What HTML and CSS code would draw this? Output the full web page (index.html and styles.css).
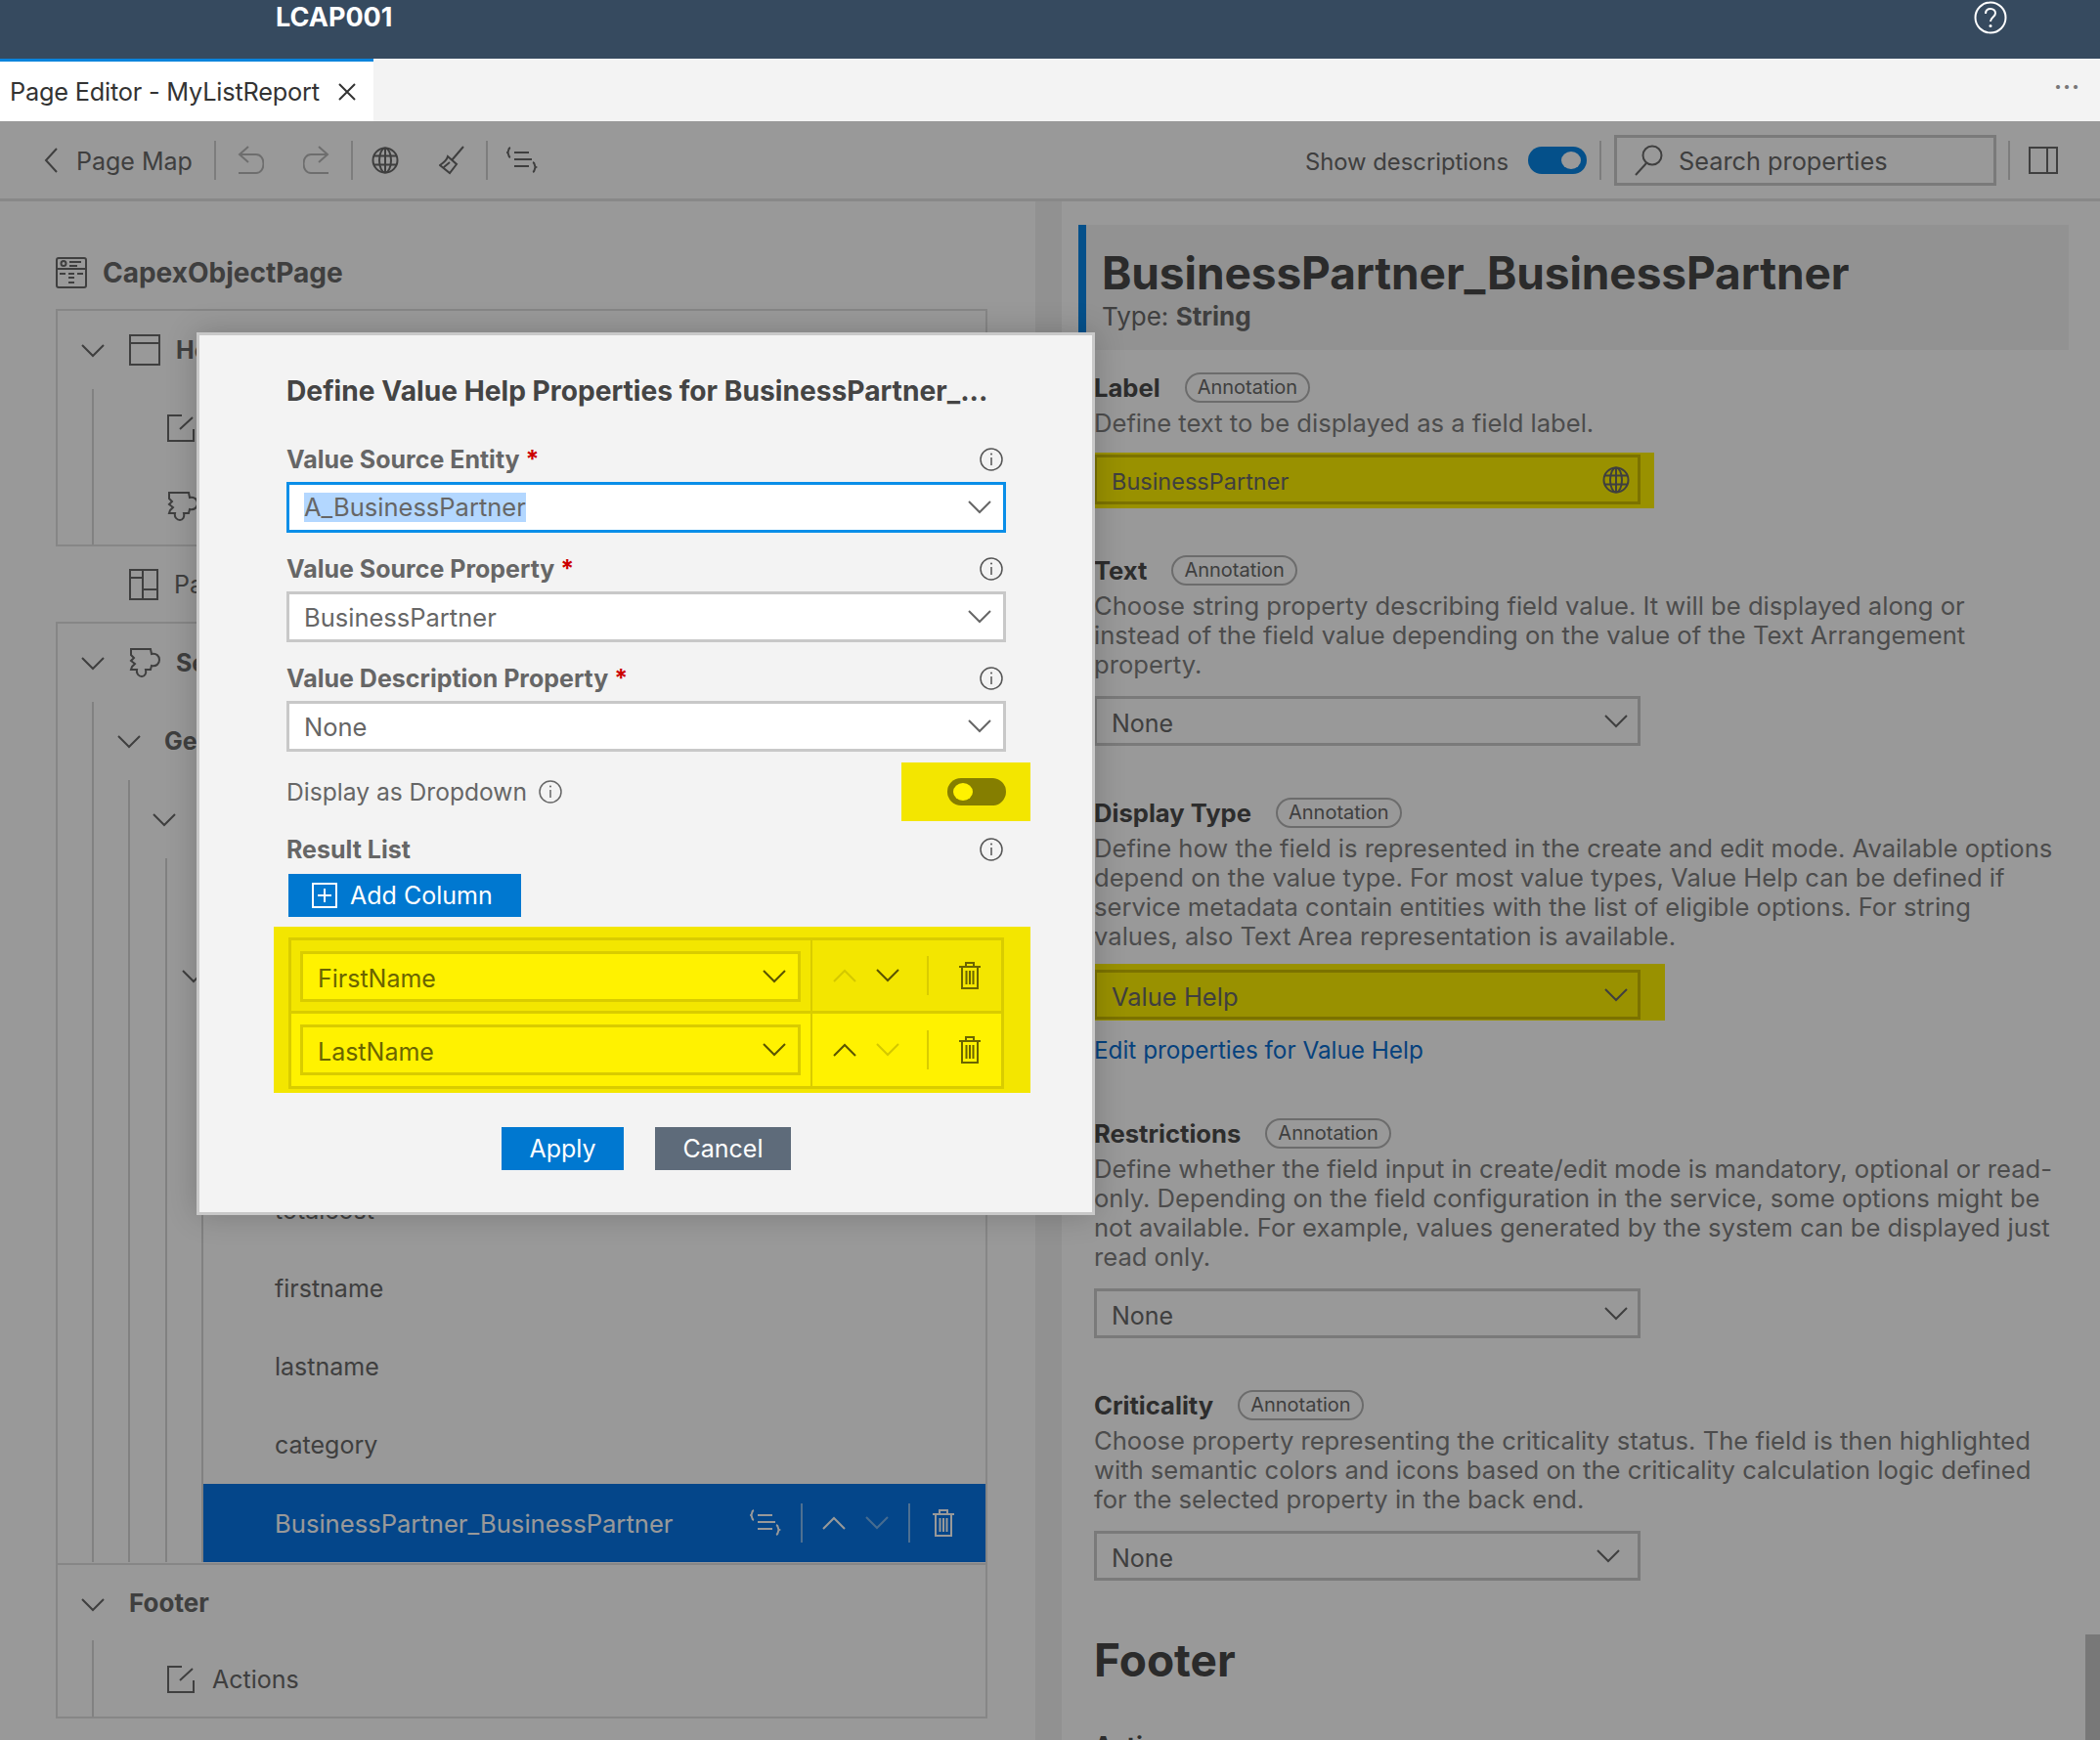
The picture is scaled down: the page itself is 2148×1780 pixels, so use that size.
FILE: index.html
```html
<!DOCTYPE html>
<html lang="en">

<head>
    <meta charset="UTF-8">
    <title>Page Editor - MyListReport</title>
    <link rel="stylesheet" href="styles.css">
</head>

<body>
    <svg class="defs" width="0" height="0">
        <symbol id="chev-down" viewBox="0 0 24 14"><path d="M1 1l11 11L23 1" fill="none" stroke="currentColor" stroke-width="2"/></symbol>
        <symbol id="chev-up" viewBox="0 0 24 14"><path d="M1 13L12 2l11 11" fill="none" stroke="currentColor" stroke-width="2"/></symbol>
        <symbol id="globe" viewBox="0 0 28 28"><g fill="none" stroke="currentColor" stroke-width="2"><circle cx="14" cy="14" r="12.500"/><ellipse cx="14" cy="14" rx="6" ry="12.500"/><path d="M14 1.500v25M2 9.500h24M2 18.500h24"/></g></symbol>
        <symbol id="braces" viewBox="0 0 32 28"><g fill="none" stroke="currentColor" stroke-width="2"><path d="M4 1C1 2 3 5 1 6c2 1 0 4 3 5M27 16c3 1 1 4 3 5-2 1 0 4-3 5"/><path d="M8 6h15M8 13h18M8 20h15"/></g></symbol>
        <symbol id="trash" viewBox="0 0 22 28"><g fill="none" stroke="currentColor" stroke-width="2"><path d="M0 5h22M7 5V1h8v4M3 5v22h16V5M7.500 9v14M11 9v14M14.500 9v14"/></g></symbol>
        <symbol id="info" viewBox="0 0 24 24"><circle cx="12" cy="12" r="11" fill="none" stroke="currentColor" stroke-width="1.500"/><path d="M12 10v8" stroke="currentColor" stroke-width="1.500"/><circle cx="12" cy="6.500" r="1" fill="currentColor"/></symbol>
        <symbol id="external" viewBox="0 0 28 28"><path d="M27 15v12H1V1h14M13 15L26 3" fill="none" stroke="currentColor" stroke-width="2"/></symbol>
        <symbol id="puzzle" viewBox="0 0 32 32"><path d="M2 2h20l1 5c5-1 8 2 8 6s-3 7-8 6l-1 4h-5c1 4-1 7-4 7s-6-3-5-7H2l1-3 3-3-4-3 3-3-3-3z" fill="none" stroke="currentColor" stroke-width="2"/></symbol>
    </svg>

    <div class="shell-bar">
        <span class="shell-title">LCAP001</span>
        <svg class="help-icon" width="34" height="34" viewBox="0 0 34 34">
            <circle cx="17" cy="17" r="15.500" fill="none" stroke="#fff" stroke-width="2"/>
            <path d="M12 13c0-3 2-5 5-5s5 2 5 4.500c0 4-5 4-5 8.500" fill="none" stroke="#fff" stroke-width="2"/>
            <circle cx="17" cy="25.500" r="1.500" fill="#fff"/>
        </svg>
    </div>

    <div class="tab-bar">
        <div class="tab">
            <span>Page Editor - MyListReport</span>
            <svg width="20" height="20" viewBox="0 0 20 20"><path d="M2 2l16 16M18 2L2 18" stroke="#333" stroke-width="2"/></svg>
        </div>
        <span class="tab-more">&middot;&middot;&middot;</span>
    </div>

    <div class="toolbar">
        <div class="tool-group">
            <svg class="tool-back" width="14" height="26" viewBox="0 0 14 26"><path d="M13 1L2 13l11 12" fill="none" stroke="currentColor" stroke-width="2"/></svg>
            <span class="tool-text">Page Map</span>
            <i class="tool-sep sep-map"></i>
            <svg class="tool-icon off" width="28" height="30" viewBox="0 0 28 30"><path d="M12 1L3 9l9 8M3 9h17c10 0 10 19 0 19H2" fill="none" stroke="currentColor" stroke-width="2"/></svg>
            <svg class="tool-icon off redo" width="28" height="30" viewBox="0 0 28 30"><path d="M16 1l9 8-9 8M25 9H8c-10 0-10 19 0 19h18" fill="none" stroke="currentColor" stroke-width="2"/></svg>
            <i class="tool-sep sep-redo"></i>
            <svg class="tool-icon globe-btn" width="28" height="28"><use href="#globe"/></svg>
            <svg class="tool-icon broom" width="26" height="30" viewBox="0 0 26 30"><path d="M25 1L13 15M9 11l9 8-7 9-10-8c3-2 7-5 8-9zM5 22l6-5" fill="none" stroke="currentColor" stroke-width="2"/></svg>
            <i class="tool-sep sep-broom"></i>
            <svg class="tool-icon braces-btn" width="32" height="28"><use href="#braces"/></svg>
        </div>
        <div class="tool-group right">
            <span class="tool-text">Show descriptions</span>
            <span class="toggle on"><i></i></span>
            <i class="tool-sep sep-toggle"></i>
            <div class="search-box">
                <svg width="30" height="32" viewBox="0 0 30 32"><circle cx="19" cy="11" r="9.500" fill="none" stroke="currentColor" stroke-width="2"/><path d="M13 19L2 31" stroke="currentColor" stroke-width="2"/></svg>
                <span>Search properties</span>
            </div>
            <i class="tool-sep sep-search"></i>
            <svg class="tool-icon" width="30" height="28" viewBox="0 0 30 28"><path d="M1 1h28v26H1zM19 1v26" fill="none" stroke="currentColor" stroke-width="2"/></svg>
        </div>
    </div>

    <div class="main">
        <div class="left-panel">
            <div class="page-title">
                <svg width="32" height="32" viewBox="0 0 32 32"><g fill="none" stroke="currentColor" stroke-width="2"><rect x="1" y="1" width="30" height="30" rx="2"/><path d="M1 12h30M14 5h12M14 9h8M4 17h6M13 17h6M22 17h6M13 21h6M13 26h6"/><circle cx="8" cy="6.500" r="2.500"/></g></svg>
                <span>CapexObjectPage</span>
            </div>

            <div class="tree-box header-box">
                <div class="tree-row">
                    <svg class="chev"><use href="#chev-down"/></svg>
                    <svg class="node-icon" width="32" height="32" viewBox="0 0 32 32"><path d="M1 1h30v30H1zM1 9h30" fill="none" stroke="currentColor" stroke-width="2"/></svg>
                    <b>Header</b>
                </div>
                <div class="tree-kids first">
                    <div class="tree-row leaf">
                        <svg class="node-icon" width="28" height="28"><use href="#external"/></svg>
                        <span>Actions</span>
                    </div>
                    <div class="tree-row leaf">
                        <svg class="node-icon" width="32" height="32"><use href="#puzzle"/></svg>
                        <span>Header Section</span>
                    </div>
                </div>
            </div>

            <div class="tree-row solo">
                <svg class="node-icon" width="30" height="32" viewBox="0 0 30 32"><path d="M1 1h28v30H1zM14 1v30M14 21h15M1 9h13" fill="none" stroke="currentColor" stroke-width="2"/></svg>
                <span>Page Layout</span>
            </div>

            <div class="tree-box sections">
                <div class="tree-row">
                    <svg class="chev"><use href="#chev-down"/></svg>
                    <svg class="node-icon" width="32" height="32"><use href="#puzzle"/></svg>
                    <b>Sections</b>
                </div>
                <div class="tree-kids first">
                    <div class="tree-row level-two">
                        <svg class="chev"><use href="#chev-down"/></svg>
                        <b>General</b>
                    </div>
                    <div class="tree-kids second">
                        <div class="tree-row level-three">
                            <svg class="chev"><use href="#chev-down"/></svg>
                        </div>
                        <div class="tree-kids third">
                            <div class="tree-row"></div>
                            <div class="tree-row level-four">
                                <svg class="chev small"><use href="#chev-down"/></svg>
                            </div>
                            <div class="columns">
                                <div class="col-row"></div>
                                <div class="col-row"></div>
                                <div class="col-row">totalcost</div>
                                <div class="col-row">firstname</div>
                                <div class="col-row">lastname</div>
                                <div class="col-row">category</div>
                                <div class="col-row selected">
                                    <span>BusinessPartner_BusinessPartner</span>
                                    <div class="row-tools">
                                        <svg width="32" height="28"><use href="#braces"/></svg>
                                        <i></i>
                                        <svg class="up" width="24" height="14"><use href="#chev-up"/></svg>
                                        <svg class="dim" width="24" height="14"><use href="#chev-down"/></svg>
                                        <i></i>
                                        <svg class="bin" width="22" height="28"><use href="#trash"/></svg>
                                    </div>
                                </div>
                            </div>
                        </div>
                    </div>
                </div>
            </div>

            <div class="tree-box footer-box">
                <div class="tree-row">
                    <svg class="chev"><use href="#chev-down"/></svg>
                    <b>Footer</b>
                </div>
                <div class="tree-kids first">
                    <div class="tree-row leaf">
                        <svg class="node-icon" width="28" height="28"><use href="#external"/></svg>
                        <span>Actions</span>
                    </div>
                </div>
            </div>
        </div>

        <div class="panel-gutter"></div>

        <div class="right-panel">
            <div class="prop-head">
                <h1>BusinessPartner_BusinessPartner</h1>
                <p>Type: <b>String</b></p>
            </div>

            <div class="prop first-prop">
                <div class="prop-label"><b>Label</b><span class="pill">Annotation</span></div>
                <p>Define text to be displayed as a field label.</p>
                <div class="mark">
                    <div class="field">
                        <span>BusinessPartner</span>
                        <svg width="28" height="28"><use href="#globe"/></svg>
                    </div>
                </div>
            </div>

            <div class="prop">
                <div class="prop-label"><b>Text</b><span class="pill">Annotation</span></div>
                <p>Choose string property describing field value. It will be displayed along or instead of the field value depending on the value of the Text Arrangement property.</p>
                <div class="field">
                    <span>None</span>
                    <svg width="24" height="14"><use href="#chev-down"/></svg>
                </div>
            </div>

            <div class="prop">
                <div class="prop-label"><b>Display Type</b><span class="pill">Annotation</span></div>
                <p>Define how the field is represented in the create and edit mode. Available options depend on the value type. For most value types, Value Help can be defined if service metadata contain entities with the list of eligible options. For string values, also Text Area representation is available.</p>
                <div class="mark wide">
                    <div class="field">
                        <span>Value Help</span>
                        <svg width="24" height="14"><use href="#chev-down"/></svg>
                    </div>
                </div>
                <a class="prop-link">Edit properties for Value Help</a>
            </div>

            <div class="prop">
                <div class="prop-label"><b>Restrictions</b><span class="pill">Annotation</span></div>
                <p>Define whether the field input in create/edit mode is mandatory, optional or read-only. Depending on the field configuration in the service, some options might be not available. For example, values generated by the system can be displayed just read only.</p>
                <div class="field">
                    <span>None</span>
                    <svg width="24" height="14"><use href="#chev-down"/></svg>
                </div>
            </div>

            <div class="prop">
                <div class="prop-label"><b>Criticality</b><span class="pill">Annotation</span></div>
                <p>Choose property representing the criticality status. The field is then highlighted with semantic colors and icons based on the criticality calculation logic defined for the selected property in the back end.</p>
                <div class="field">
                    <span>None</span>
                    <svg class="shift" width="24" height="14"><use href="#chev-down"/></svg>
                </div>
            </div>

            <h2>Footer</h2>
            <div class="prop-label"><b>Actions</b></div>
        </div>
        <div class="scroll-thumb"></div>
    </div>

    <div class="overlay">
        <div class="dialog">
            <h3>Define Value Help Properties for BusinessPartner_...</h3>

            <div class="dlg-label"><span>Value Source Entity <em>*</em></span><svg width="24" height="24"><use href="#info"/></svg></div>
            <div class="dlg-field focus">
                <span class="selected-text">A_BusinessPartner</span>
                <svg width="24" height="14"><use href="#chev-down"/></svg>
            </div>

            <div class="dlg-label"><span>Value Source Property <em>*</em></span><svg width="24" height="24"><use href="#info"/></svg></div>
            <div class="dlg-field">
                <span>BusinessPartner</span>
                <svg width="24" height="14"><use href="#chev-down"/></svg>
            </div>

            <div class="dlg-label"><span>Value Description Property <em>*</em></span><svg width="24" height="24"><use href="#info"/></svg></div>
            <div class="dlg-field">
                <span>None</span>
                <svg width="24" height="14"><use href="#chev-down"/></svg>
            </div>

            <div class="dropdown-row">
                <span>Display as Dropdown</span>
                <svg width="24" height="24"><use href="#info"/></svg>
                <div class="toggle-mark"><span class="toggle off"><i></i></span></div>
            </div>

            <div class="dlg-label result"><span>Result List</span><svg width="24" height="24"><use href="#info"/></svg></div>
            <button class="btn add-btn">
                <svg width="26" height="26" viewBox="0 0 26 26"><path d="M1 1h24v24H1zM13 6v14M6 13h14" fill="none" stroke="#fff" stroke-width="2"/></svg>
                Add Column
            </button>

            <div class="list-mark">
                <div class="list-table">
                    <div class="list-row shaded">
                        <div class="list-cell">
                            <div class="list-select">
                                <span>FirstName</span>
                                <svg width="24" height="14"><use href="#chev-down"/></svg>
                            </div>
                        </div>
                        <div class="list-tools">
                            <svg class="dim" width="24" height="14"><use href="#chev-up"/></svg>
                            <svg width="24" height="14"><use href="#chev-down"/></svg>
                            <i></i>
                            <svg class="bin" width="22" height="28"><use href="#trash"/></svg>
                        </div>
                    </div>
                    <div class="list-row">
                        <div class="list-cell">
                            <div class="list-select">
                                <span>LastName</span>
                                <svg width="24" height="14"><use href="#chev-down"/></svg>
                            </div>
                        </div>
                        <div class="list-tools">
                            <svg width="24" height="14"><use href="#chev-up"/></svg>
                            <svg class="dim" width="24" height="14"><use href="#chev-down"/></svg>
                            <i></i>
                            <svg class="bin" width="22" height="28"><use href="#trash"/></svg>
                        </div>
                    </div>
                </div>
            </div>

            <div class="dlg-actions">
                <button class="btn apply-btn">Apply</button>
                <button class="btn cancel-btn">Cancel</button>
            </div>
        </div>
    </div>
</body>

</html>
```

FILE: styles.css
```css
* {
    margin: 0;
    padding: 0;
    box-sizing: border-box;
}

body {
    position: relative;
    width: 2148px;
    height: 1780px;
    overflow: hidden;
    background: #fff;
    font-family: Inter, 'Noto Sans', sans-serif;
    font-size: 25px;
    color: #696969;
}

.defs {
    position: absolute;
}

svg {
    flex: none;
    display: block;
}

i {
    display: block;
}

/* top bars */
.shell-bar {
    height: 60px;
    background: #364a5f;
    display: flex;
    justify-content: space-between;
    padding: 1px 95px 0 282px;
}

.shell-title {
    color: #fff;
    font-size: 27px;
    font-weight: 700;
    line-height: 34px;
}

.tab-bar {
    height: 64px;
    background: #f3f3f3;
    display: flex;
    justify-content: space-between;
}

.tab {
    width: 382px;
    background: #fff;
    border-top: 3px solid #0a84dc;
    padding-left: 10px;
    display: flex;
    align-items: center;
    gap: 18px;
    color: #333;
    font-size: 25.300px;
    letter-spacing: -0.2px;
}

.tab-more {
    padding-right: 20px;
    line-height: 58px;
    font-size: 24px;
    font-weight: 700;
    color: #777;
    letter-spacing: 1px;
}

.toolbar {
    height: 82px;
    border-bottom: 3px solid #e3e3e3;
    display: flex;
    justify-content: space-between;
    align-items: center;
    color: #696969;
}

.tool-group {
    display: flex;
    align-items: center;
    padding-left: 45px;
}

.tool-group.right {
    padding: 0 43px 0 0;
}

.tool-text {
    margin-left: 19px;
    padding-top: 2px;
}

.right .tool-text {
    margin: 0 20px 0 0;
    padding-top: 3px;
    font-size: 23.800px;
}

.tool-sep {
    width: 2px;
    height: 40px;
    background: #d0d0d0;
}

.sep-map { margin: 0 21px 0 22px; }
.redo { margin: 0 21px 0 40px; }
.globe-btn { margin: 0 41px 0 19px; }
.broom { margin-right: 22px; }
.braces-btn { margin-left: 19px; }
.sep-toggle { margin: 0 13px; }
.sep-search { margin: 0 19px 0 12px; }

.tool-icon.off {
    color: #b8b8b8;
}

.toggle {
    display: block;
    width: 60px;
    height: 28px;
    border-radius: 14px;
    position: relative;
}

.toggle i {
    position: absolute;
    top: 5px;
    width: 20px;
    height: 18px;
    border-radius: 50%;
    background: #fff;
}

.toggle.on {
    background: #0885e6;
}

.toggle.on i {
    left: 34px;
}

.toggle.off {
    background: #857e00;
}

.toggle.off i {
    left: 6px;
    background: #fff200;
}

.search-box {
    width: 391px;
    height: 52px;
    border: 3px solid #cbcbcb;
    display: flex;
    align-items: center;
    gap: 16px;
    padding-left: 17px;
    color: #696969;
}

.search-box span {
    font-size: 25.300px;
    padding-top: 1px;
}

/* main area */
.main {
    position: relative;
    height: 1574px;
    display: flex;
}

.left-panel {
    width: 1059px;
    padding: 0 49px 0 57px;
}

.panel-gutter {
    width: 27px;
    background: #f2f2f2;
}

.page-title {
    height: 110px;
    display: flex;
    align-items: center;
    gap: 16px;
    font-size: 28px;
    font-weight: 700;
    padding-top: 36px;
}

.tree-box {
    border: 2px solid #e0e0e0;
}

.header-box {
    height: 243px;
    overflow: hidden;
}

.tree-row {
    height: 80px;
    display: flex;
    align-items: center;
    position: relative;
    padding-left: 73px;
    gap: 16px;
}

.tree-row b {
    font-weight: 700;
}

.chev {
    position: absolute;
    left: 24px;
    top: 34px;
    width: 24px;
    height: 14px;
}

.tree-kids {
    border-left: 2px solid #d8d8d8;
}

.tree-kids.first {
    margin-left: 35px;
}

.tree-row.leaf {
    padding-left: 75px;
    gap: 18px;
}

.tree-row.solo {
    height: 77px;
    padding-left: 75px;
}

.tree-box.sections {
    height: 963px;
    border-bottom: none;
    overflow: hidden;
}

.level-two {
    padding-left: 72px;
}

.level-two .chev {
    left: 24px;
}

.tree-kids.second {
    margin-left: 35px;
}

.level-three .chev {
    left: 23px;
}

.tree-kids.third {
    margin-left: 36px;
}

.level-four .chev {
    left: 15px;
}

.columns {
    margin-left: 35px;
    border-left: 2px solid #d8d8d8;
}

.col-row {
    height: 80px;
    display: flex;
    align-items: center;
    padding-left: 73px;
    justify-content: space-between;
}

.col-row.selected {
    background: #0776e6;
    color: #fff;
    padding-right: 32px;
}

.col-row.selected > span {
    font-size: 25.600px;
}

.row-tools {
    display: flex;
    align-items: center;
    gap: 20px;
}

.row-tools i {
    width: 2px;
    height: 40px;
    background: rgba(255, 255, 255, 0.5);
}

.row-tools .dim {
    opacity: 0.45;
}

.row-tools .bin {
    margin-left: 3px;
}

.footer-box {
    height: 159px;
    overflow: hidden;
}

.footer-box .tree-row {
    height: 77px;
}

.footer-box .tree-row b {
    margin-left: 0;
    font-size: 26px;
}

.footer-box .tree-kids .tree-row {
    padding-left: 75px;
}

.footer-box .tree-row.leaf {
    height: 80px;
}

/* properties */
.right-panel {
    flex: 1;
    padding: 24px 32px 0 17px;
}

.prop-head {
    height: 128px;
    background: #f3f3f3;
    border-left: 8px solid #0885e6;
    padding: 20px 0 0 16px;
}

.prop-head h1 {
    font-size: 46px;
    font-weight: 700;
    line-height: 58px;
    color: #484848;
    letter-spacing: -0.1px;
}

.prop-head p {
    font-size: 26px;
    line-height: 32px;
}

.prop {
    margin: 0 0 48px 16px;
}

.first-prop {
    margin-top: 18px;
    margin-bottom: 43px;
}

.prop-label {
    height: 40px;
    display: flex;
    align-items: center;
    gap: 25px;
    color: #4b4b4b;
    font-size: 25.600px;
}

.prop-label b {
    font-weight: 700;
}

.pill {
    height: 31px;
    padding: 0 11px;
    border: 2px solid #b5b5b5;
    border-radius: 16px;
    font-size: 20px;
    line-height: 27px;
    color: #696969;
}

.prop p {
    line-height: 30px;
    margin-top: 2px;
    margin-right: 13px;
    font-size: 25.600px;
    color: #7f7f7f;
}

.field {
    width: 559px;
    height: 51px;
    margin-top: 17px;
    border: 3px solid #cbcbcb;
    display: flex;
    align-items: center;
    justify-content: space-between;
    padding: 0 10px 0 15px;
}

.field span {
    padding-top: 4px;
}

.field .shift {
    margin-right: 8px;
}

.mark {
    width: 573px;
    height: 57px;
    margin-top: 15px;
    padding-top: 2px;
    background: #fff200;
}

.mark .field {
    margin-top: 0;
    border-color: #cdbf00;
    padding-right: 8px;
}

.first-prop .mark span {
    font-size: 23.500px;
}

.mark.wide {
    width: 584px;
    height: 58px;
    margin-top: 13px;
    padding-top: 6px;
}

.mark.wide .field {
    padding-right: 10px;
}

.mark.wide span {
    font-size: 25.500px;
}

.prop-link {
    display: block;
    margin-top: 13px;
    line-height: 34px;
    font-size: 24.300px;
    color: #0a6ed1;
}

.right-panel h2 {
    margin: 52px 0 0 16px;
    font-size: 46px;
    line-height: 58px;
    color: #484848;
}

.right-panel > .prop-label {
    margin: 38px 0 0 16px;
}

.scroll-thumb {
    position: absolute;
    right: 0;
    bottom: 0;
    width: 15px;
    height: 108px;
    background: #c8c8c8;
}

/* dialog */
.overlay {
    position: absolute;
    top: 124px;
    left: 0;
    right: 0;
    bottom: 0;
    background: rgba(0, 0, 0, 0.4);
}

.dialog {
    position: absolute;
    left: 201px;
    top: 216px;
    width: 919px;
    height: 903px;
    background: #f3f3f3;
    border: 3px solid #c8c8c8;
    padding: 40px 88px 0 89px;
    box-shadow: 0 0 30px rgba(0, 0, 0, 0.2);
    font-size: 25px;
    color: #666;
}

.dialog h3 {
    font-size: 28.200px;
    font-weight: 700;
    line-height: 34px;
    color: #444;
    margin-bottom: 38px;
    white-space: nowrap;
}

.dlg-label {
    height: 30px;
    display: flex;
    justify-content: space-between;
    align-items: center;
    font-weight: 700;
    margin-top: 22px;
    padding-right: 3px;
    color: #666;
}

.dlg-label svg {
    color: #555;
}

.dlg-label em {
    color: #c00;
    font-style: normal;
}

.dlg-field {
    height: 52px;
    margin-top: 8px;
    background: #fff;
    border: 3px solid #c8c8c8;
    display: flex;
    align-items: center;
    justify-content: space-between;
    padding: 0 12px 0 15px;
    font-size: 25.500px;
}

.dlg-field.focus {
    border-color: #0a8ee8;
}

.selected-text {
    background: #b3d7ff;
    line-height: 30px;
}

.dropdown-row {
    height: 60px;
    margin: 11px -25px 0 0;
    display: flex;
    align-items: center;
    gap: 12px;
    font-size: 24.600px;
}

.toggle-mark {
    margin-left: auto;
    width: 132px;
    height: 60px;
    background: #f3e600;
    padding: 16px 25px 0 47px;
}

.dlg-label.result {
    margin-top: 14px;
}

.btn {
    border: none;
    color: #fff;
    font-family: inherit;
    font-size: 25px;
    height: 44px;
}

.add-btn {
    width: 238px;
    margin: 10px 0 0 2px;
    background: #0078d0;
    display: flex;
    align-items: center;
    gap: 13px;
    padding-left: 24px;
}

.list-mark {
    margin: 10px -25px 0 -13px;
    height: 170px;
    background: #f3e600;
    padding: 11px 27px 0 15px;
}

.list-table {
    border: 3px solid #d9cc00;
    color: #6b6500;
}

.list-row {
    height: 74px;
    display: flex;
    background: #fff200;
}

.list-row.shaded {
    background: #f3e600;
    border-bottom: 3px solid #d9cc00;
    height: 75px;
}

.list-cell {
    width: 533px;
    padding: 11px 10px 0 9px;
    border-right: 2px solid #d9cc00;
}

.list-select {
    height: 52px;
    background: #fff200;
    border: 3px solid #d9cc00;
    display: flex;
    align-items: center;
    justify-content: space-between;
    padding: 0 12px 0 15px;
}

.list-select span {
    padding-top: 4px;
}

.list-select svg,
.list-tools svg {
    color: #5a5400;
}

.list-tools {
    flex: 1;
    display: flex;
    align-items: center;
    padding-left: 21px;
    gap: 20px;
}

.list-tools i {
    width: 2px;
    height: 40px;
    margin-left: 8px;
    background: #d9cc00;
}

.list-tools .dim {
    color: #d4c800;
}

.list-tools .bin {
    margin-left: 11px;
    color: #6b6500;
}

.dlg-actions {
    margin-top: 35px;
    display: flex;
    justify-content: center;
    gap: 32px;
}

.apply-btn {
    width: 125px;
    background: #0078d0;
}

.cancel-btn {
    width: 139px;
    background: #5e6b7a;
}
```
